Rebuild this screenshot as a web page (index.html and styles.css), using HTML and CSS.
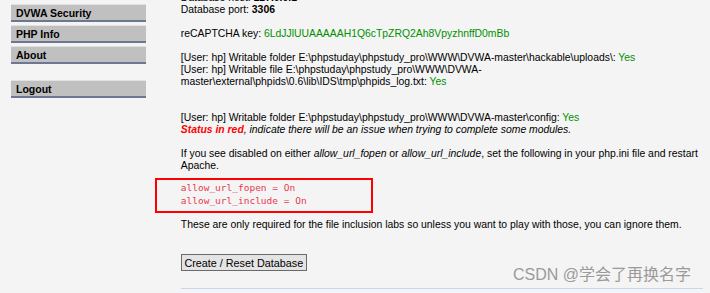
FILE: index.html
```html
<!doctype html>
<html>
  <head>
    <meta http-equiv="Content-Type" content="text/html; charset=UTF-8" />
    <title>Setup :: Damn Vulnerable Web Application</title>
    <link rel="stylesheet" href="styles.css">
  </head>
  <body>
    <div id="container">
      <div id="main_menu">
        <ul class="menuBlocks">
          <li><a href="#">DVWA Security</a></li>
          <li><a href="#">PHP Info</a></li>
          <li><a href="#">About</a></li>
        </ul>
        <ul class="menuBlocks">
          <li><a href="#">Logout</a></li>
        </ul>
      </div>
      <div id="main_body">
        <p class="first">Database host: <b>127.0.0.1</b><br>Database port: <b>3306</b></p>
        <p>reCAPTCHA key: <span class="success">6LdJJlUUAAAAAH1Q6cTpZRQ2Ah8VpyzhnffD0mBb</span></p>
        <p>[User: hp] Writable folder E:\phpstuday\phpstudy_pro\WWW\DVWA-master\hackable\uploads\: <span class="success">Yes</span><br>
          [User: hp] Writable file E:\phpstuday\phpstudy_pro\WWW\DVWA-<br>master\external\phpids\0.6\lib\IDS\tmp\phpids_log.txt: <span class="success">Yes</span></p>
        <p class="spaced">[User: hp] Writable folder E:\phpstuday\phpstudy_pro\WWW\DVWA-master\config: <span class="success">Yes</span><br>
          <i><span class="failure">Status in red</span>, indicate there will be an issue when trying to complete some modules.</i></p>
        <p>If you see disabled on either <i>allow_url_fopen</i> or <i>allow_url_include</i>, set the following in your php.ini file and restart<br>Apache.</p>
        <pre class="mark"><code>allow_url_fopen = On
allow_url_include = On</code></pre>
        <p class="after">These are only required for the file inclusion labs so unless you want to play with those, you can ignore them.</p>
        <form class="setup">
          <input type="button" value="Create / Reset Database">
        </form>
        <div class="rule"></div>
      </div>
    </div>
    <div class="watermark">CSDN @学会了再换名字</div>
  </body>
</html>
```

FILE: styles.css
```css
body {
  margin: 0;
  background-color: #f4f4f4;
  font-family: "Liberation Sans", Arial, sans-serif;
  font-size: 10.4px;
  color: #000;
  overflow: hidden;
}
#container {
  display: flex;
}
#main_menu {
  width: 135px;
  padding: 4px 0 0 11px;
  margin-right: 35px;
}
.menuBlocks {
  list-style: none;
  margin: 0 0 16px;
  padding: 0;
}
.menuBlocks li {
  margin-bottom: 3px;
}
.menuBlocks a {
  display: block;
  height: 15px;
  line-height: 16px;
  padding-left: 5px;
  background-color: #c0c0c0;
  border-top: 1px solid #e2e2e2;
  border-bottom: 2px solid #6c7891;
  font-weight: bold;
  font-size: 10.5px;
  color: #000;
  text-decoration: none;
}
#main_body {
  width: 530px;
  line-height: 12px;
  margin-top: -8px;
}
p {
  margin: 12px 0 0;
}
p.first {
  margin-top: 0;
}
p.spaced {
  margin-top: 24px;
}
.success {
  color: #009000;
}
.failure {
  color: #ff0000;
  font-weight: bold;
}
.mark {
  width: 190px;
  margin: 6px 0 0 -26px;
  padding: 2px 0 3px 24px;
  border: 2px solid #ff0000;
  font-family: "Liberation Mono", monospace;
  font-size: 9.5px;
  line-height: 12px;
  color: #e8384f;
}
p.after {
  margin-top: 6px;
}
.setup {
  margin-top: 23px;
}
.setup input {
  height: 17px;
  width: 126px;
  padding: 0;
  background-color: #e4e4e4;
  border: 1px solid #6a6a6a;
  font-family: "Liberation Sans", Arial, sans-serif;
  font-size: 10.8px;
  color: #000;
}
.rule {
  margin-top: 17px;
  height: 1px;
  width: 522px;
  background-color: #c5d5f4;
}
.watermark {
  position: absolute;
  left: 513px;
  top: 261px;
  font-family: "Liberation Sans", "Noto Sans CJK SC", sans-serif;
  font-size: 16px;
  color: #9a9a9a;
}
```
